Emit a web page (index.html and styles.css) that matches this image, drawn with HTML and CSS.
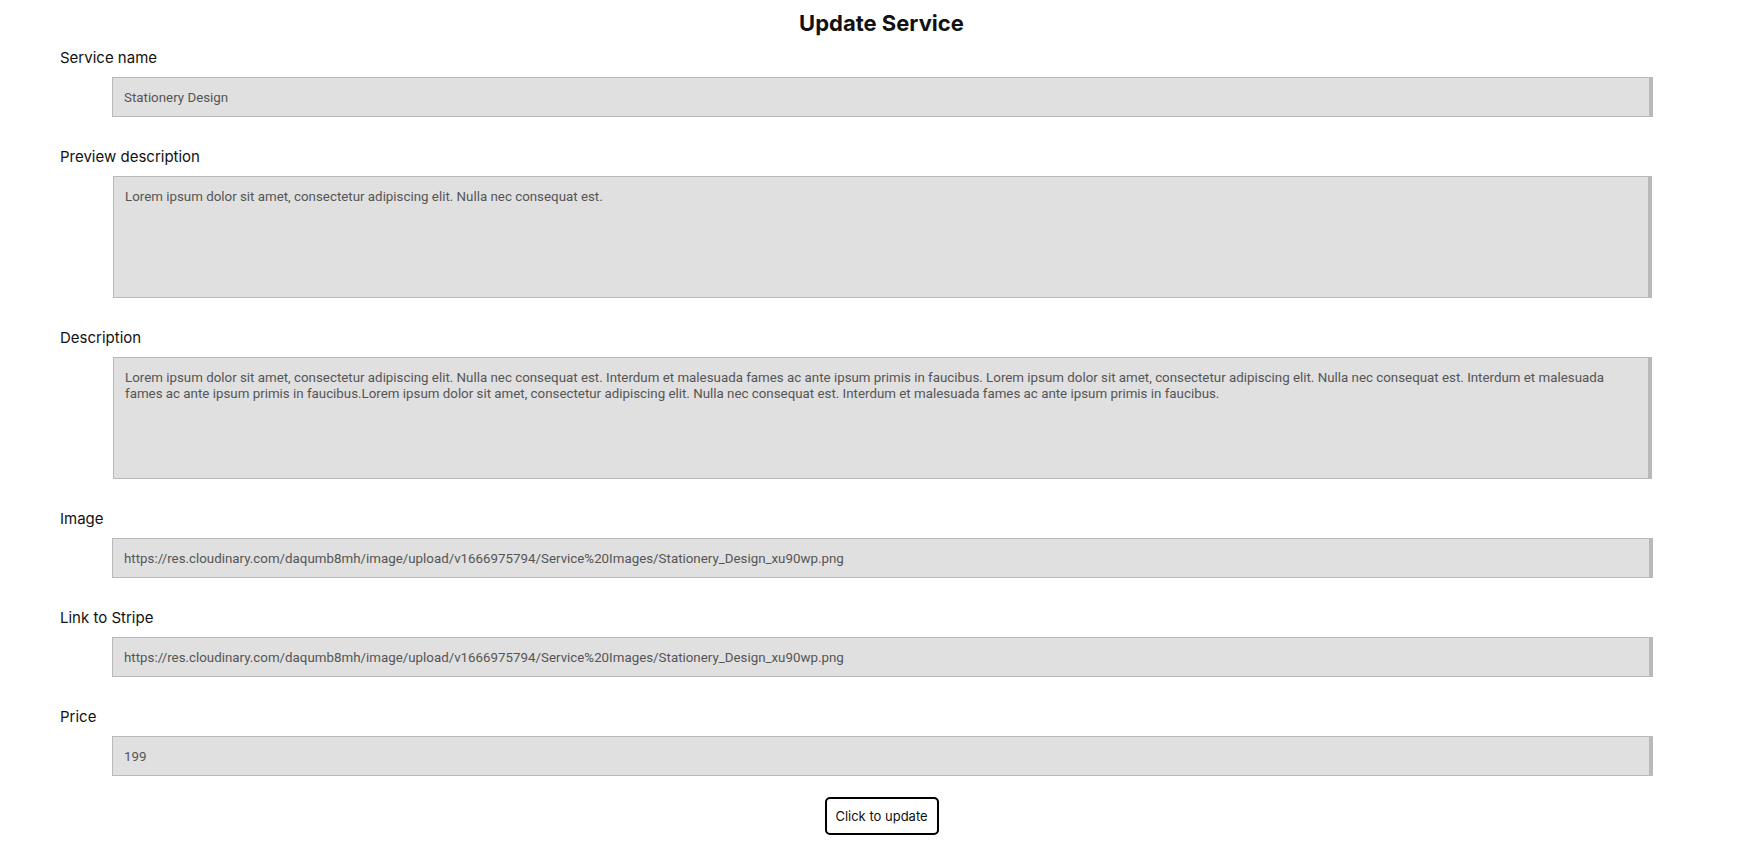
FILE: index.html
```html
<!DOCTYPE html>
<html lang="en">
<head>
<meta charset="utf-8">
<title>Update Service</title>
<link rel="stylesheet" href="styles.css">
</head>
<body>
<main class="page">
  <h1 class="title">Update Service</h1>
  <form class="form">
    <div class="field">
      <label class="label" for="name">Service name</label>
      <input class="control" id="name" type="text" value="Stationery Design">
    </div>
    <div class="field">
      <label class="label" for="preview">Preview description</label>
      <textarea class="control area" id="preview">Lorem ipsum dolor sit amet, consectetur adipiscing elit. Nulla nec consequat est.</textarea>
    </div>
    <div class="field">
      <label class="label" for="desc">Description</label>
      <textarea class="control area" id="desc">Lorem ipsum dolor sit amet, consectetur adipiscing elit. Nulla nec consequat est. Interdum et malesuada fames ac ante ipsum primis in faucibus. Lorem ipsum dolor sit amet, consectetur adipiscing elit. Nulla nec consequat est. Interdum et malesuada fames ac ante ipsum primis in faucibus.Lorem ipsum dolor sit amet, consectetur adipiscing elit. Nulla nec consequat est. Interdum et malesuada fames ac ante ipsum primis in faucibus.</textarea>
    </div>
    <div class="field">
      <label class="label" for="image">Image</label>
      <input class="control" id="image" type="text" value="https://res.cloudinary.com/daqumb8mh/image/upload/v1666975794/Service%20Images/Stationery_Design_xu90wp.png">
    </div>
    <div class="field">
      <label class="label" for="stripe">Link to Stripe</label>
      <input class="control" id="stripe" type="text" value="https://res.cloudinary.com/daqumb8mh/image/upload/v1666975794/Service%20Images/Stationery_Design_xu90wp.png">
    </div>
    <div class="field">
      <label class="label" for="price">Price</label>
      <input class="control" id="price" type="text" value="199">
    </div>
    <div class="actions">
      <button class="button" type="button">Click to update</button>
    </div>
  </form>
</main>
</body>
</html>
```

FILE: styles.css
```css
* { box-sizing: border-box; }

html, body {
  margin: 0;
  padding: 0;
  background: #ffffff;
}

body {
  font-family: Inter, "Noto Sans", "Liberation Sans", sans-serif;
  color: #111111;
}

.page {
  padding: 10px 0 0 0;
}

.title {
  margin: 0;
  text-align: center;
  font-size: 22px;
  line-height: 26px;
  font-weight: 700;
  color: #111111;
}

.form {
  display: flex;
  flex-direction: column;
  margin-top: 13px;
}

.field {
  display: flex;
  flex-direction: column;
  align-items: flex-start;
}

.field + .field {
  margin-top: 31px;
}

.label {
  font-size: 15px;
  line-height: 18px;
  margin: 0 0 10px 60px;
  color: #111111;
}

.control {
  display: block;
  width: 1541px;
  height: 40px;
  margin-left: 112px;
  padding: 0 11px;
  background: #e0e0e0;
  border: 1px solid #b9b9b9;
  border-right: 4px solid #b9b9b9;
  border-radius: 0;
  font-family: Roboto, "Liberation Sans", sans-serif;
  font-size: 13.333px;
  color: #555555;
  outline: none;
}

.area {
  width: 1539px;
  height: 122px;
  margin-left: 113px;
  padding: 12px 11px;
  line-height: 16px;
  resize: none;
  overflow: hidden;
}

.actions {
  display: flex;
  justify-content: center;
  margin-top: 21px;
}

.button {
  width: 114px;
  height: 38px;
  padding: 0;
  background: #ffffff;
  border: 2px solid #000000;
  border-radius: 5px;
  font-family: Inter, "Noto Sans", sans-serif;
  font-size: 13px;
  color: #111111;
  cursor: pointer;
}
```
